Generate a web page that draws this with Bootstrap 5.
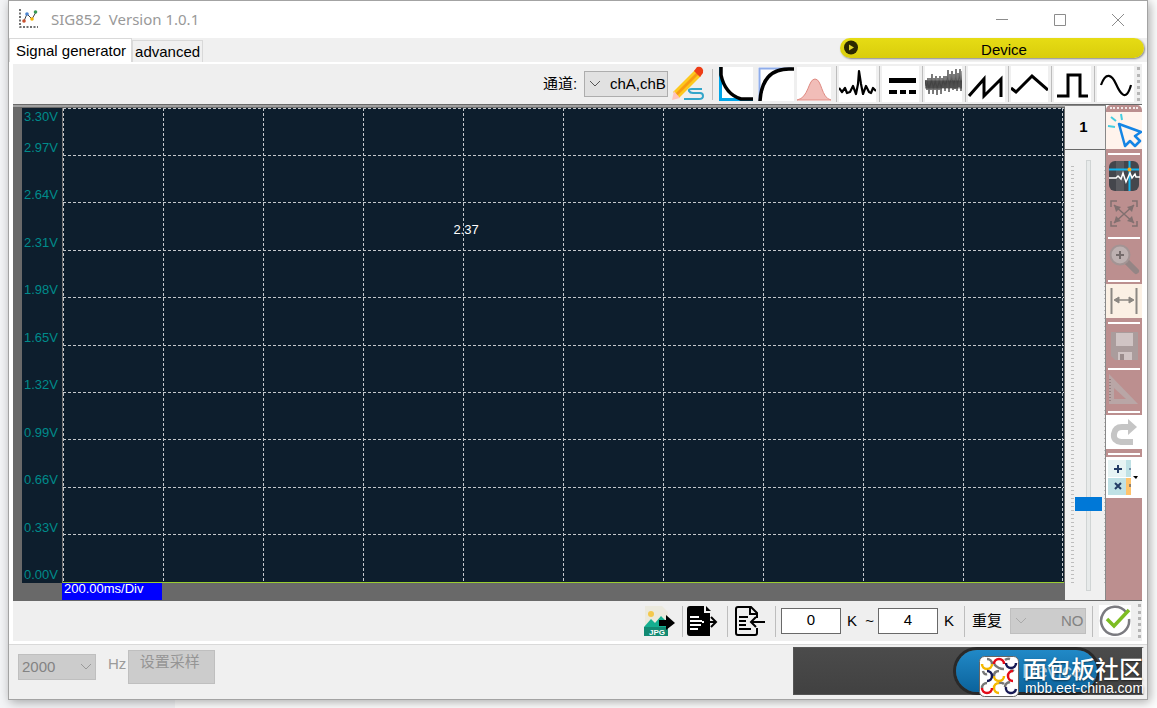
<!DOCTYPE html>
<html lang="zh-CN">
<head>
<meta charset="utf-8">
<meta name="viewport" content="width=device-width, initial-scale=1">
<title>SIG852 Version 1.0.1</title>
<link href="https://cdn.jsdelivr.net/npm/bootstrap@5.3.0/dist/css/bootstrap.min.css" rel="stylesheet">
<style>
  :root { --face: #f0f0f0; --grey: #696969; --rose: #bc8f8f; --navy: #0d1e2d; }
  body { font-family: "Liberation Sans", "Noto Sans CJK SC", sans-serif; font-size: 15px; line-height: 20px; color: #000;
    background: linear-gradient(90deg, #f3f4f6 175px, #fdfdfd 175px); }
  .app-window { margin: 0 9px 8px 8px; height: calc(100vh - 8px); min-height: 600px; border: 1px solid #a3a3a3; background: var(--face); box-shadow: 2px 2px 10px #0005; }
  .title-bar { height: 37px; background: #fff; color: #999; font: 15px/20px "Noto Sans", sans-serif; padding: 0 0 2px 9px; }
  .title-text { white-space: pre; margin-left: 12px; }
  .win-btn { width: 58px; height: 35px; border: 0; background: none; padding: 0; color: #8c8c8c; }
  .tab-row { height: 24px; padding-right: 3px; }
  .tab-btn { border: 1px solid #d9d9d9; border-bottom: 0; background: var(--face); padding: 0 2px; color: #000; }
  .tab-btn.active { background: #fff; padding: 0 5px 0 6px; height: 24px; line-height: 20px; }
  .tab-btn.inactive { height: 22px; margin-top: 2px; }
  .device-btn { width: 304px; height: 20px; border: 0; border-radius: 10px; background: linear-gradient(#e6dc14, #d9cd0c); padding: 0 1px; box-shadow: 1px 1px 2px #888; }
  .pane { background: #fff; padding: 2px 5px 3px 4px; border-bottom: 1px solid #d9d9d9; min-height: 0; }
  .tool-row { display: grid; height: 40px; background: #efefef; align-items: center; justify-content: end; }
  .top-tools { grid-template-columns: 41px 87px 41px 7px 39px 39px 39px repeat(7, 43px) 5px; }
  .bottom-tools { grid-template-columns: 38px 5px 40px 8px 40px 6px 62px 35px 62px 24px 8px 38px 82px 7px 39px 4px; }
  .flat-btn { border: 0; background: none; padding: 0; display: block; line-height: 0; color: #000; }
  .flat-btn svg { display: block; }
  .cell { border-left: 1px solid #bdbdbd; padding-left: 2px; }
  .cell svg, .wave svg { background: #fff; }
  .divider { width: 1px; height: 31px; background: #bdbdbd; }
  .grip { width: 0; height: 34px; border-left: 3px dotted #b5b5b5; }
  .drop { position: relative; }
  .drop svg { position: absolute; top: 9px; pointer-events: none; }
  .drop select { appearance: none; height: 26px; border: 1px solid #adadad; background: #e1e1e1; border-radius: 0; padding: 0 0 0 3px; width: 84px; color: #000; display: block; }
  .drop select:disabled { background: #ccc; border-color: #bfbfbf; color: #838383; opacity: 1; }
  .num { width: 60px; height: 26px; border: 1px solid #696969; background: #fff; text-align: center; padding: 0 0 3px; display: block; }
  .scope { background: var(--grey); border-top: 2px solid #a0a0a0; padding: 1px 1px 0 9px; min-width: 0; }
  .stage { min-height: 0; border-top: 1px solid #696969; border-bottom: 1px solid #696969; }
  .volt-list { width: 40px; background: var(--navy); color: #008b8b; font-size: 13px; line-height: 16px; padding: 1px 0 0 2px; }
  .plot { background: var(--navy); border-left: 1px solid #777; border-bottom: 1px solid #9acd32; min-width: 0; }
  .plot svg { position: absolute; inset: 0; width: 100%; height: 100%; }
  .peak { position: absolute; left: 39%; top: 24%; color: #fff; font-size: 13px; line-height: 16px; }
  .time-base { width: 100px; height: 17px; background: #00f; color: #fff; font-size: 13px; line-height: 11px; padding-left: 2px; margin-left: 40px; }
  .gain { width: 41px; background: var(--face); border-right: 1px solid #888; }
  .gain-num { height: 45px; border-bottom: 1px solid #696969; border-top: 1px solid #888; text-align: center; line-height: 42px; font-weight: bold; padding-right: 3px; }
  .gain-track { container-type: size; position: relative; margin: 10px 0 9px; }
  .gain-track::before { content: ""; position: absolute; left: 6px; top: 6px; bottom: 6px; width: 3px; background: repeating-linear-gradient(#bdbdbd 0 1px, transparent 1px 4px); }
  .gain-track::after { content: ""; position: absolute; right: 0; top: 6px; bottom: 6px; width: 1px; background: repeating-linear-gradient(#bdbdbd 0 1px, transparent 1px 4px); }
  .gain-track input { appearance: none; position: absolute; left: 10px; top: 100%; width: 100cqh; height: 27px; margin: 0; background: none; transform: rotate(-90deg); transform-origin: 0 0; }
  .gain-track input::-webkit-slider-runnable-track { height: 5px; background: #e7eaea; border: 1px solid #d0d4d4; }
  .gain-track input::-webkit-slider-thumb { appearance: none; width: 14px; height: 27px; margin-top: -12px; background: #0078d7; border: 0; }
  .side { width: 36px; background: var(--rose); border-radius: 5px 5px 0 0; }
  .side .dots { height: 3px; margin: 2px 4px 2px; border-top: 2px dotted #f2e8e8; }
  .side hr { margin: 4px 2px 2px; border: 0; border-top: 2px solid #fff; opacity: 1; }
  .sample { height: 54px; padding: 5px 0 0 9px; color: #9b9b9b; }
  .sample select { width: 78px; }
  .sample-btn { width: 87px; height: 34px; background: #ccc; border: 1px solid #bfbfbf; color: #959595; line-height: 20px; padding: 0 4px 11px 0; margin-left: 2px; }
  .banner { width: 351px; height: 48px; background: linear-gradient(#4b4b4b, #414141); border: 1px solid #555; position: relative; margin-top: -3px; margin-right: 3px; border-right: 2px solid #eee; }
  .pill { position: absolute; left: 162px; top: 2px; width: 141px; height: 42px; border-radius: 22px; border: 0; background: linear-gradient(#2189c7, #0b639c); color: #a9cfe6; box-shadow: 0 0 0 3px #292929; font-size: 20px; padding: 0 0 0 66px; text-align: left; }
  .brand { position: absolute; left: 185px; top: 8px; color: #fff; width: 170px; height: 42px; }
  .brand-name { font: 500 24px/24px "Noto Sans CJK SC", sans-serif; text-shadow: 0 1px 2px #0008; white-space: nowrap; }
  .brand-link { font: 14px/17px "Liberation Sans", sans-serif; color: #fff; text-decoration: none; text-shadow: 0 1px 2px #0008; white-space: nowrap; padding-left: 2px; }
</style>
</head>
<body>
<main class="app-window d-flex flex-column">
  <header class="title-bar d-flex align-items-center">
    <svg width="21" height="21" viewBox="0 0 21 21" fill="none"><path d="M2 1v18h18" stroke="#444" stroke-width="1.500" stroke-dasharray="2 1.500"/><path d="M6 13 9 6l5 5 4-7" stroke="#444"/><circle cx="6" cy="13" r="1.800" fill="#c8502e"/><circle cx="9" cy="6" r="1.800" fill="#4a83d0"/><circle cx="14" cy="11" r="1.800" fill="#f4b400"/><circle cx="17.500" cy="4" r="1.800" fill="#379a55"/></svg>
    <span class="title-text">SIG852  Version 1.0.1</span>
    <div class="d-flex ms-auto">
      <button class="win-btn" aria-label="Minimize"><svg width="14" height="14" stroke="currentColor"><path d="M1 6.500h12"/></svg></button>
      <button class="win-btn" aria-label="Maximize"><svg width="14" height="14" stroke="currentColor" fill="none"><path d="M1.500 1.500h11v11h-11z"/></svg></button>
      <button class="win-btn" aria-label="Close"><svg width="14" height="14" stroke="currentColor"><path d="m1 1 12 12M13 1 1 13"/></svg></button>
    </div>
  </header>
  <div class="tab-row d-flex">
    <button class="tab-btn active">Signal generator</button>
    <button class="tab-btn inactive">advanced</button>
    <button class="device-btn ms-auto d-flex align-items-center">
      <svg width="20" height="18"><circle cx="10" cy="8.500" r="7" fill="#2b2800"/><path d="m8 5.500 5 3-5 3z" fill="#ddd22a"/></svg>
      <span class="flex-grow-1 pt-1 ps-1">Device</span>
    </button>
  </div>

  <section class="pane d-flex flex-column flex-grow-1">
    <div class="tool-row top-tools">
      <label for="channel">通道:</label>
      <div class="drop"><svg style="left:5px" width="12" height="8" fill="none" stroke="#555"><path d="m1 1 5 5 5-5"/></svg>
        <select id="channel" style="padding-left:25px"><option>chA,chB</option></select></div>
      <button class="flat-btn" aria-label="Draw"><svg width="36" height="36" viewBox="0 0 36 36"><path d="M2 26 24 4l6 6L8 32z" fill="#fdc81e"/><path d="m4 28 22-22 2 2L6 30z" fill="#f79b12"/><path d="m23 5 3-4q3-1 5 1t1 5l-3 4z" fill="#ee3d16"/><path d="m3 25-2 9 8-2z" fill="#ffc4bd"/><path d="M31 23H21q-4 0-3 2 1 2 4 2h7q3 0 3 3t-4 3H13" fill="none" stroke="#34a6ca" stroke-width="2"/></svg></button>
      <span class="divider"></span>
      <button class="flat-btn wave" aria-label="Decay"><svg width="34" height="34" fill="none"><path d="M1.500 0v32.500H34" stroke="#00a5e8" stroke-width="3"/><path d="M2 0v8Q6 27 22 32h12" stroke="#000" stroke-width="3.500"/></svg></button>
      <button class="flat-btn wave" aria-label="Rise"><svg width="36" height="34" fill="none"><path d="M1.500 34V1.500H34" stroke="#8eacea" stroke-width="2"/><path d="M2 34Q4 2 31 2h5" stroke="#000" stroke-width="3.500"/></svg></button>
      <button class="flat-btn wave" aria-label="Gaussian"><svg width="34" height="34"><path d="M0 33c12-2 11-21 18-21s6 19 16 21z" fill="#f1bdb8" stroke="#df8a82"/></svg></button>
      <button class="flat-btn cell" aria-label="Sinc"><svg width="37" height="36" fill="none" stroke="#000" stroke-width="2.200" stroke-linejoin="round"><path d="m0 22 3 4 3-4 2 5 3-1 3-6 3 8 2-10L20 5l2 13 2 10 3-8 3 6 2 1 2-5 3 3"/></svg></button>
      <button class="flat-btn cell" aria-label="DC"><svg width="37" height="36"><path d="M7 12h27v5H7zm0 12h8v4H7zm11 0h6v4h-6zm9 0h7v4h-7z"/></svg></button>
      <button class="flat-btn cell" aria-label="Noise"><svg width="37" height="36" stroke="#333" fill="none"><path d="m0 20 1-6 1 10 1-12 1 16 1-16 1 12 1-16 1 20 1-16 1 12 1-14 1 19 1-17 1 12 1-14 1 18 1-16 1 10 1-12 1 15 1-15 1 12 1-18 1 22 1-18 1 14 1-17 1 19 1-16 1 15 1-20 1 22 1-18 1 14 1-18 1 22 1-20" opacity=".8"/><path d="M0 18.500h37" stroke-width="8" opacity=".6"/></svg></button>
      <button class="flat-btn cell" aria-label="Sawtooth"><svg width="37" height="36" fill="none" stroke="#000" stroke-width="3"><path d="m1 30 15-17v17l17-17v18"/></svg></button>
      <button class="flat-btn cell" aria-label="Triangle"><svg width="37" height="36" fill="none" stroke="#000" stroke-width="3"><path d="m0 22 5 4 16-16 16 14"/></svg></button>
      <button class="flat-btn cell" aria-label="Square"><svg width="37" height="36" fill="none" stroke="#000" stroke-width="3"><path d="M3 30h11V9h12v21h8"/></svg></button>
      <button class="flat-btn cell" aria-label="Sine"><svg width="37" height="36" fill="none" stroke="#000" stroke-width="2.200"><path d="M4 19C9 5 15 9 19 18s10 19 15 1"/></svg></button>
      <span class="grip"></span>
    </div>

    <div class="stage d-flex flex-grow-1">
      <div class="scope d-flex flex-column flex-grow-1">
        <div class="d-flex flex-grow-1">
          <div class="volt-list d-flex flex-column">
            <span>3.30V</span>
            <div class="d-flex flex-column flex-grow-1 justify-content-between" style="padding-top:15px">
              <span>2.97V</span><span>2.64V</span><span>2.31V</span><span>1.98V</span><span>1.65V</span><span>1.32V</span><span>0.99V</span><span>0.66V</span><span>0.33V</span><span>0.00V</span>
            </div>
          </div>
          <div class="plot position-relative flex-grow-1">
            <svg id="grid" stroke="#c4c8cc" stroke-dasharray="3 2" shape-rendering="crispEdges"></svg>
            <span class="peak">2.37</span>
          </div>
        </div>
        <div class="time-base">200.00ms/Div</div>
      </div>
      <div class="gain d-flex flex-column">
        <div class="gain-num">1</div>
        <div class="gain-track flex-grow-1"><input type="range" min="0" max="100" value="19" aria-label="Gain"></div>
      </div>
      <div class="side d-flex flex-column">
        <div class="dots"></div>
        <button class="flat-btn" aria-label="Select"><svg width="36" height="37" fill="none" style="background:#fff3ec"><path d="m5 5 5 4M15 2l1 6M2 14l7 1" stroke="#45cde0" stroke-width="2"/><path d="m13 12 6 22 5-5 5 5 5-5-5-5 6-4z" stroke="#1585e5" stroke-width="2.500" stroke-linejoin="round"/></svg></button>
        <hr>
        <button class="flat-btn" aria-label="Cursor"><svg width="36" height="36" fill="none"><rect x="3" y="4" width="30" height="30" rx="6" fill="#44464c"/><path d="M14 4v30" stroke="#5a5b60" stroke-width="8"/><path d="M3 12.500h30M23.500 4v30" stroke="#14b6ee" stroke-width="2"/><path d="M3 21h7l2-2 3 3 2-6 3 9 4-9 2 5 3-4 1 3h4" stroke="#fff" stroke-width="1.500"/><circle cx="23.500" cy="12.500" r="2" fill="#ffa514"/></svg></button>
        <button class="flat-btn" aria-label="Fit"><svg width="36" height="40" fill="none" stroke="#817070" stroke-width="1.500"><path d="m8 12 20 18M28 12 8 30M5 14V8h6m15 0h5v6m0 14v5h-5m-15 0H5v-5"/><path d="m8 12 7 2-5 5zM28 12l-7 2 5 5zM8 30l7-2-5-5zM28 30l-7-2 5-5z" fill="#817070" stroke="none"/></svg></button>
        <hr>
        <button class="flat-btn" aria-label="Zoom"><svg width="36" height="35" fill="none"><path d="m21 21 9 9" stroke="#948585" stroke-width="6" stroke-linecap="round"/><circle cx="14" cy="14" r="9.500" fill="#bdb1b1" stroke="#a39494" stroke-width="2"/><path d="M14 10v8m-4-4h8" stroke="#756c6c" stroke-width="2"/></svg></button>
        <hr>
        <button class="flat-btn" aria-label="Measure width"><svg width="36" height="34" style="background:#fbf0e4" stroke="#8c8883"><path d="M5.500 4v26M30.500 4v26" stroke-width="2"/><path d="M9 16h18" stroke-width="1.500"/><path d="m8 16 5-3v6zm20 0-5-3v6z" fill="#8c8883"/></svg></button>
        <hr>
        <button class="flat-btn" aria-label="Save"><svg width="36" height="38"><path d="M5 6h27v28H9l-4-4z" fill="#aa9c9c"/><path d="M10 7h17v13H10zm2 19h14v8H12z" fill="#d0c4c4"/><path d="M14 28h4v6h-4z" fill="#9a8c8c"/></svg></button>
        <hr>
        <button class="flat-btn" aria-label="Triangle ruler"><svg width="36" height="35"><path fill-rule="evenodd" d="M3 2v30h29zm5 14 12 11H8z" fill="#b9a6a6"/><path d="M4 7v24" stroke="#968282" stroke-width="2" stroke-dasharray="1 2"/></svg></button>
        <hr>
        <button class="flat-btn" aria-label="Redo"><svg width="36" height="34" style="background:#fff"><path d="M27 27H15q-8-1-7-8 1-7 8-7h8" fill="none" stroke="#c5c5c5" stroke-width="6"/><path d="m22 4 9 8-9 8z" fill="#c5c5c5"/></svg></button>
        <hr>
        <button class="flat-btn" aria-label="Math"><svg width="36" height="41" style="background:#fff"><path d="M2 3h18v17H2z" fill="#e7f4f4"/><path d="M20 3h5v17h-5zM2 21h18v17H2z" fill="#bfe1e5"/><path d="M20 21h5v17h-5z" fill="#ffc36b"/><path d="M12 8v8m-4-4h8m-7 14 6 6m0-6-6 6" stroke="#243d66" stroke-width="2"/><path d="M24 11v2m0 14v3" stroke="#243d66"/><path d="M27 19h5l-2 3z"/></svg></button>
      </div>
    </div>

    <div class="tool-row bottom-tools">
      <button class="flat-btn" aria-label="Export JPG"><svg width="31" height="31"><path d="M1 0h17l6 6v24H1z" fill="#ebe9dd"/><circle cx="7" cy="8" r="3" fill="#f4c84c"/><path d="m0 21 7-8 4 4 6-7 7 7v6H0z" fill="#15ae90"/><path d="M0 21h24v9H0z" fill="#128a73"/><path d="M15 14h7V9l9 8-9 7v-4h-7z" fill="#000"/><text x="5" y="29" font-size="8" font-weight="bold" fill="#fff">JPG</text></svg></button>
      <span class="divider"></span>
      <button class="flat-btn" aria-label="Export file"><svg width="34" height="32"><path d="M3 1h14v7h6v23H3q-3 0-3-3V4q0-3 3-3zm16 0 5 5h-5z"/><path d="M3 12h9M3 16h12M3 20h11M3 24h8M15 17h9" stroke="#fff" stroke-width="2"/><path d="M17 17h12m-5-5 5 5-5 5" fill="none" stroke="#000" stroke-width="2"/></svg></button>
      <span class="divider"></span>
      <button class="flat-btn" aria-label="Import file"><svg width="34" height="32" fill="none" stroke="#000" stroke-width="2"><path d="M22 13V8l-6-6H3Q1 2 1 4v24q0 2 2 2h17q2 0 2-2v-5M15 2v7h7M4 12h9M4 16h7M4 20h7M4 24h12M30 17H16m5-5-5 5 5 5"/></svg></button>
      <span class="divider"></span>
      <input class="num" aria-label="From" value="0">
      <span class="ps-1">K&nbsp; ~</span>
      <input class="num" aria-label="To" value="4">
      <span class="ps-1">K</span>
      <span class="divider"></span>
      <label for="repeat">重复</label>
      <div class="drop"><svg style="left:5px" width="12" height="8" fill="none" stroke="#aaa"><path d="m1 1 5 5 5-5"/></svg>
        <select id="repeat" disabled style="padding-left:50px;width:76px"><option>NO</option></select></div>
      <span class="divider"></span>
      <button class="flat-btn" aria-label="Apply"><svg width="32" height="32" fill="none" style="background:#fff"><path d="M27 7a14 14 0 1 0 3 7" stroke="#7b7b80" stroke-width="2.500"/><path d="m8 14 7 7L30 5" stroke="#7dbd22" stroke-width="3.500"/></svg></button>
      <span class="grip"></span>
    </div>
  </section>

  <footer class="sample d-flex align-items-start">
    <div class="drop pt-1"><svg style="right:4px;top:13px" width="12" height="8" fill="none" stroke="#999"><path d="m1 1 5 5 5-5"/></svg>
      <select id="rate" disabled><option>2000</option></select></div>
    <label for="rate" class="ms-2 ps-1 pt-1">Hz</label>
    <button class="sample-btn">设置采样</button>
    <div class="banner ms-auto">
      <button class="pill">Device</button>
      <div class="brand d-flex">
        <svg class="flex-shrink-0" width="40" height="41" fill="none" stroke-width="2.500">
          <rect x=".5" y=".5" width="39" height="40" rx="5" fill="#fff" stroke="#666" stroke-width="1"/>
          <path d="M8 3a5 5 0 0 1 5 5M15 8q4 5 10 5M31 3a5 5 0 0 0-5 1M4 15q1 4 4 3M15 20q0-5 5-5M35 15q-2-1-4 0M3 32a5 5 0 0 1 5-5M25 28q-2-2-5-1M26 31q0-4 5-5" stroke="#777"/>
          <path d="M3 8a5 5 0 0 0 10 0M15 20a5 5 0 0 0 10 0M20 27a5 5 0 0 0 0 10" stroke="#f5b800"/>
          <path d="M15 8a5 5 0 0 1 10 0M34 15a5 5 0 0 0 0 10M3 32a5 5 0 0 0 10 0" stroke="#e30b17"/>
          <path d="M27 7a5 5 0 0 0 10 0M8 15a5 5 0 0 1 0 10M27 31a5 5 0 0 0 10 2" stroke="#171a55"/>
        </svg>
        <div class="d-flex flex-column ps-1"><span class="brand-name">面包板社区</span><a class="brand-link" href="#">mbb.eet-china.com</a></div>
      </div>
    </div>
  </footer>
</main>
<script src="https://cdn.jsdelivr.net/npm/bootstrap@5.3.0/dist/js/bootstrap.bundle.min.js"></script>
<script>
  // Ten divisions each way; the bottom edge is the trace itself.
  const grid = document.getElementById('grid');
  const addLine = (coords) => {
    const line = document.createElementNS('http://www.w3.org/2000/svg', 'line');
    for (const k in coords) line.setAttribute(k, coords[k]);
    grid.append(line);
  };
  for (let i = 0; i <= 10; i++) {
    const p = i === 10 ? '99.9%' : i === 0 ? '0.05%' : i * 10 + '%';
    addLine({ x1: p, x2: p, y1: 0, y2: '100%' });
    if (i < 10) addLine({ y1: p, y2: p, x1: 0, x2: '100%' });
  }
</script>
</body>
</html>
